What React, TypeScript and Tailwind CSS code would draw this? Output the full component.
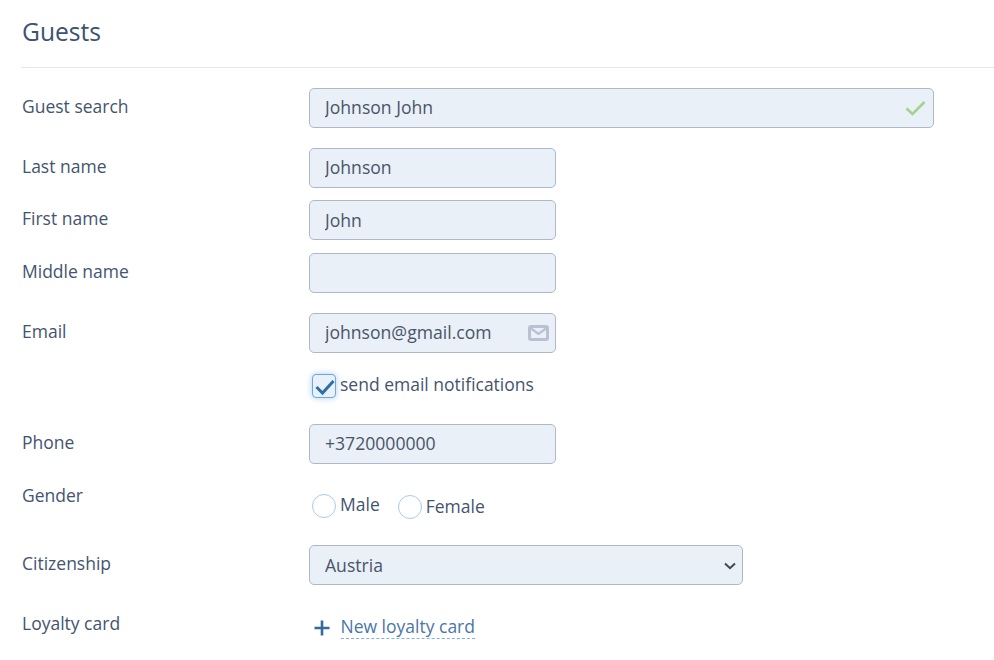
import React from 'react';

const baseClass = "h-10 bg-[#e9f0f8] border border-[#b0b7c9] rounded-[5px] pl-[15px] pr-2 text-[17.6px] text-[#4a5568] outline-none";
const inputClass = `${baseClass} pb-[2px]`;

const Row = ({ label, className, children }: { label: string; className: string; children: React.ReactNode }) => (
    <div className={`flex ${className}`}>
        <label className="w-[287px] shrink-0 pt-[6px] text-[17.5px] leading-6 text-[#44546f]">{label}</label>
        {children}
    </div>
);

const App = () => {
    return (
        <div className="w-[994px] h-[660px] overflow-hidden bg-white pl-[22px] font-['Open_Sans',sans-serif]">
            <h2 className="h-[68px] -ml-px pl-px pt-[14px] text-[24.6px] leading-9 text-[#3c5273] border-b border-[#e3e6ee]">Guests</h2>

            <Row label="Guest search" className="mt-5 h-10">
                <div className="relative">
                    <input type="text" readOnly value="Johnson John" className={`${inputClass} w-[625px]`} />
                    <svg className="absolute right-[8px] top-[12px]" width="21" height="16" viewBox="0 0 21 16" fill="none">
                        <path d="M1.5 8.5L7.5 14L19.5 2" stroke="#a3d38e" strokeWidth="2.6" />
                    </svg>
                </div>
            </Row>
            <Row label="Last name" className="mt-5 h-10">
                <input type="text" readOnly value="Johnson" className={`${inputClass} w-[247px]`} />
            </Row>
            <Row label="First name" className="mt-3 h-10">
                <input type="text" readOnly value="John" className={`${baseClass} w-[247px]`} />
            </Row>
            <Row label="Middle name" className="mt-[13px] h-10">
                <input type="text" readOnly className={`${inputClass} w-[247px]`} />
            </Row>
            <Row label="Email" className="mt-5 h-10">
                <div className="relative">
                    <input type="text" readOnly value="johnson@gmail.com" className={`${inputClass} w-[247px]`} />
                    <svg className="absolute right-[7px] top-[12px]" width="21" height="16" viewBox="0 0 21 16" fill="none">
                        <rect x="1.5" y="1.5" width="18" height="13" rx="1.5" stroke="#b9c1d2" strokeWidth="3" />
                        <path d="M3 3.5L10.5 9L18 3.5" stroke="#b9c1d2" strokeWidth="2.2" />
                    </svg>
                </div>
            </Row>
            <div className="flex items-center mt-[21px] ml-[290px] h-6">
                <span className="relative w-6 h-6 rounded-[4px] border border-[#6aa8e0] bg-[#e9f0f8] shadow-[0_0_6px_#a9cdf0]">
                    <svg className="absolute left-[2px] top-[3px]" width="20" height="18" viewBox="0 0 20 18" fill="none">
                        <path d="M1.5 9L7.5 15L18.5 3" stroke="#2f6ea5" strokeWidth="3" />
                    </svg>
                </span>
                <span className="ml-[4px] text-[17.5px] leading-6 text-[#44546f] -mt-[4px]">send email notifications</span>
            </div>
            <Row label="Phone" className="mt-[26px] h-10">
                <input type="text" readOnly value="+3720000000" className={`${inputClass} w-[247px]`} />
            </Row>
            <Row label="Gender" className="mt-[13px] h-[40px]">
                <div className="flex ml-[3px] mt-[17px]">
                    <span className="w-6 h-6 rounded-full border border-[#a9cbe8] bg-white" />
                    <span className="ml-[4px] -mt-[2px] text-[17.5px] leading-6 text-[#44546f]">Male</span>
                    <span className="ml-[18px] mt-[1px] w-6 h-6 rounded-full border border-[#a9cbe8] bg-white" />
                    <span className="ml-[4px] text-[17.5px] leading-6 text-[#44546f]">Female</span>
                </div>
            </Row>
            <Row label="Citizenship" className="mt-[28px] h-10">
                <div className="relative">
                    <select defaultValue="Austria" className="appearance-none h-10 w-[434px] bg-[#e9f0f8] border border-[#b0b7c9] rounded-[5px] pl-[15px] text-[17.6px] text-[#4a5568] outline-none">
                        <option>Austria</option>
                    </select>
                    <svg className="absolute right-[7px] top-[17px] pointer-events-none" width="12" height="8" viewBox="0 0 12 8" fill="none">
                        <path d="M1 1.5L6 6.2L11 1.5" stroke="#3f4650" strokeWidth="2" />
                    </svg>
                </div>
            </Row>
            <Row label="Loyalty card" className="mt-[20px] h-10">
                <div className="flex items-start ml-[5px] mt-[2px]">
                    <svg className="mt-[13px] shrink-0" width="16" height="16" viewBox="0 0 16 16" fill="none">
                        <path d="M8 0.5V15.5M0.5 8H15.5" stroke="#35699e" strokeWidth="2.6" />
                    </svg>
                    <a className="ml-[10.5px] mt-[7px] h-[24px] text-[17.5px] leading-[24px] text-[#4a76a8] border-b border-dashed border-[#7fb2e0] box-content">New loyalty card</a>
                </div>
            </Row>
        </div>
    );
};

export default App;
